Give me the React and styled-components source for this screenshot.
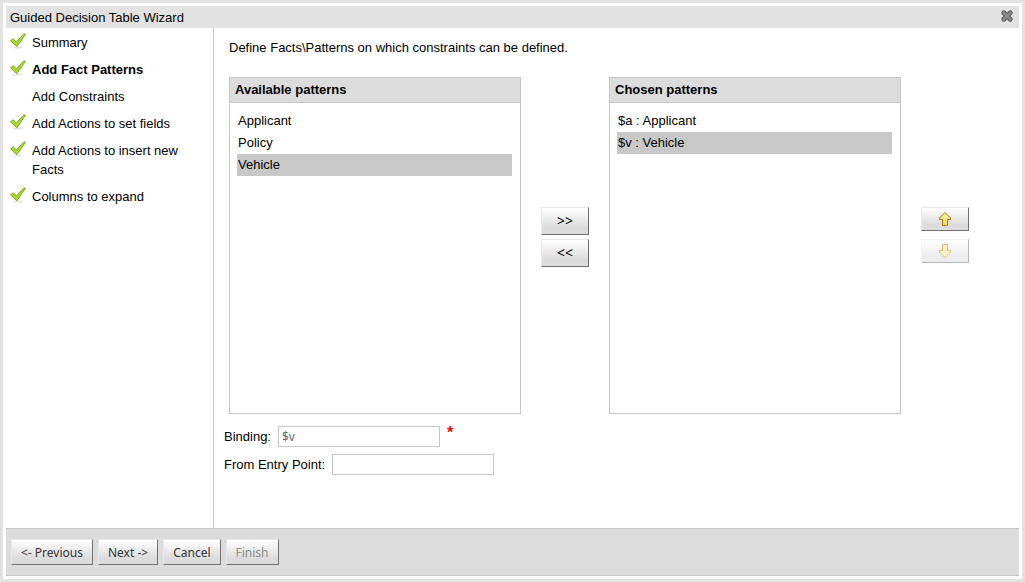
import { useState } from 'react';
import styled, { createGlobalStyle } from 'styled-components';

const GlobalStyle = createGlobalStyle`
  * {
    box-sizing: border-box;
  }

  body {
    margin: 0;
    background: #ffffff;
    color: #000000;
    font-family: 'Liberation Sans', Arial, sans-serif;
    font-size: 13px;
    line-height: 19px;
  }
`;

const Dialog = styled.main`
  display: flex;
  flex-direction: column;
  min-height: 100vh;
  padding: 3px;
  border: 3px solid #e2e2e2;
`;

const TitleBar = styled.header`
  display: flex;
  align-items: center;
  justify-content: space-between;
  height: 22px;
  padding: 0 4px;
  background: #e2e2e2;
`;

const Title = styled.h1`
  margin: 0;
  font-size: 13px;
  font-weight: 400;
`;

const CloseButton = styled.button`
  display: flex;
  width: 16px;
  height: 18px;
  padding: 0;
  border: none;
  background: none;
`;

const Body = styled.div`
  display: flex;
  flex: 1;
`;

const Sidebar = styled.nav`
  flex: 0 0 208px;
  padding: 5px 4px;
  border-right: 1px solid #c6c6c6;
`;

const Steps = styled.ol`
  display: flex;
  flex-direction: column;
  gap: 8px;
  margin: 0;
  padding: 0;
  list-style: none;
`;

const Step = styled.li`
  display: grid;
  grid-template-columns: 16px 1fr;
  column-gap: 6px;
  padding-right: 24px;
  font-weight: ${({ $current }) => ($current ? 700 : 400)};
`;

const StepLabel = styled.span`
  grid-column: 2;
`;

const Content = styled.section`
  flex: 1;
  min-width: 0;
  padding: 10px;
`;

const Intro = styled.p`
  margin: 0 0 20px;
  padding: 0 5px;
`;

const Patterns = styled.div`
  display: grid;
  grid-template-columns: minmax(0, 1fr) 48px minmax(0, 1fr) 48px;
  gap: 20px;
  padding: 0 40px 0 5px;
`;

const Panel = styled.section`
  min-height: 337px;
  border: 1px solid #c6c6c6;
`;

const PanelTitle = styled.h2`
  margin: 0;
  padding: 2px 5px 3px;
  border-bottom: 1px solid #c6c6c6;
  background: #dcdcdc;
  font-size: 13px;
  line-height: 19px;
`;

const PatternList = styled.ul`
  margin: 0;
  padding: 7px 8px 7px 7px;
  list-style: none;
`;

const PatternItem = styled.button`
  display: block;
  width: 100%;
  height: 22px;
  padding: 0 1px 2px;
  border: none;
  background: ${({ $selected }) => ($selected ? '#c8c8c8' : 'transparent')};
  color: inherit;
  font: inherit;
  text-align: left;
`;

const ButtonColumn = styled.div`
  display: flex;
  flex-direction: column;
  gap: ${({ $gap }) => $gap}px;
  padding-top: 130px;
`;

const Button = styled.button`
  display: flex;
  align-items: center;
  justify-content: center;
  height: 26px;
  padding: 0 9px;
  border: 1px solid;
  border-color: #e8e8e8 #707070 #707070 #e8e8e8;
  background: linear-gradient(#ffffff, #dcdcdc 75%);
  color: #333333;
  font-family: 'Noto Sans', 'Open Sans', sans-serif;
  font-size: 12px;
  white-space: nowrap;

  &:disabled {
    color: #8c8c8c;
  }
`;

const MoveButton = styled(Button)`
  height: 28px;
  padding-bottom: 2px;
  color: #000000;
  font-size: 14px;
`;

const ArrowButton = styled(Button)`
  height: 24px;
  padding: 0;

  &:disabled {
    opacity: 0.5;
  }
`;

const Form = styled.form`
  display: flex;
  flex-direction: column;
  gap: 7px;
  margin-top: 12px;
`;

const Field = styled.div`
  display: flex;
  align-items: center;
  gap: 7px;
`;

const Input = styled.input`
  width: 162px;
  height: 21px;
  padding: 0 3px;
  border: 1px solid #c6c6c6;
  color: #666666;
  font-family: 'Noto Sans', 'Open Sans', sans-serif;
  font-size: 12px;
`;

const Required = styled.span`
  align-self: flex-start;
  color: #ff0000;
  font-size: 16px;
  font-weight: 700;
  line-height: 14px;
`;

const Footer = styled.footer`
  display: flex;
  gap: 5px;
  padding: 10px 5px;
  border-top: 1px solid #c6c6c6;
  border-bottom: 1px solid #c6c6c6;
  background: #dcdcdc;
`;

const CheckIcon = () => (
  <svg width="16" height="16" viewBox="0 0 16 16" aria-hidden="true">
    <ellipse cx="8" cy="14.500" rx="5" ry="1" fill="#e4e4e4" />
    <path
      d="M.6 7.700 3.400 5.800l2.900 3.300L13.800.9l1.700.3L6.800 13.800z"
      fill="#a8da30"
      stroke="#7cab26"
      strokeLinejoin="round"
    />
  </svg>
);

const CloseIcon = () => (
  <svg width="16" height="16" viewBox="0 0 16 16" aria-hidden="true">
    <path
      d="M4.800 4.800 11.200 11.200M11.200 4.800 4.800 11.200"
      stroke="#5c5c5c"
      strokeWidth="5"
      strokeLinecap="round"
    />
    <path
      d="M4.800 4.800 11.200 11.200M11.200 4.800 4.800 11.200"
      stroke="#868686"
      strokeWidth="3"
      strokeLinecap="round"
    />
  </svg>
);

const ArrowIcon = ({ down }) => (
  <svg width="16" height="16" viewBox="0 0 16 16" aria-hidden="true">
    <defs>
      <linearGradient id="arrow-fill" x2="0" y2="1">
        <stop offset="0" stopColor="#fff0b0" />
        <stop offset="1" stopColor="#ffd45c" />
      </linearGradient>
    </defs>
    <path
      d="M8 1.500 13.500 7v1.500h-3v6h-5v-6h-3V7z"
      transform={down ? 'rotate(180 8 8)' : undefined}
      fill="url(#arrow-fill)"
      stroke="#b87506"
      strokeLinejoin="round"
    />
  </svg>
);

const steps = [
  { label: 'Summary', done: true },
  { label: 'Add Fact Patterns', done: true, current: true },
  { label: 'Add Constraints' },
  { label: 'Add Actions to set fields', done: true },
  { label: 'Add Actions to insert new Facts', done: true },
  { label: 'Columns to expand', done: true },
];

const available = ['Applicant', 'Policy', 'Vehicle'];
const chosen = ['$a : Applicant', '$v : Vehicle'];

const PatternPanel = ({ title, items }) => {
  const [selected, setSelected] = useState(items[items.length - 1]);

  return (
    <Panel>
      <PanelTitle>{title}</PanelTitle>
      <PatternList>
        {items.map((item) => (
          <li key={item}>
            <PatternItem
              type="button"
              aria-pressed={item === selected}
              $selected={item === selected}
              onClick={() => setSelected(item)}
            >
              {item}
            </PatternItem>
          </li>
        ))}
      </PatternList>
    </Panel>
  );
};

const App = () => {
  const [binding, setBinding] = useState('$v');

  return (
    <>
      <GlobalStyle />
      <Dialog>
        <TitleBar>
          <Title>Guided Decision Table Wizard</Title>
          <CloseButton type="button" aria-label="Close">
            <CloseIcon />
          </CloseButton>
        </TitleBar>
        <Body>
          <Sidebar>
            <Steps>
              {steps.map(({ label, done, current }) => (
                <Step key={label} $current={current}>
                  {done && <CheckIcon />}
                  <StepLabel>{label}</StepLabel>
                </Step>
              ))}
            </Steps>
          </Sidebar>
          <Content>
            <Intro>
              Define Facts\Patterns on which constraints can be defined.
            </Intro>
            <Patterns>
              <PatternPanel title="Available patterns" items={available} />
              <ButtonColumn $gap={4}>
                <MoveButton type="button">&gt;&gt;</MoveButton>
                <MoveButton type="button">&lt;&lt;</MoveButton>
              </ButtonColumn>
              <PatternPanel title="Chosen patterns" items={chosen} />
              <ButtonColumn $gap={8}>
                <ArrowButton type="button" aria-label="Move up">
                  <ArrowIcon />
                </ArrowButton>
                <ArrowButton type="button" aria-label="Move down" disabled>
                  <ArrowIcon down />
                </ArrowButton>
              </ButtonColumn>
            </Patterns>
            <Form>
              <Field>
                <label htmlFor="binding">Binding:</label>
                <Input
                  id="binding"
                  value={binding}
                  onChange={(e) => setBinding(e.target.value)}
                />
                <Required>*</Required>
              </Field>
              <Field>
                <label htmlFor="entry-point">From Entry Point:</label>
                <Input id="entry-point" />
              </Field>
            </Form>
          </Content>
        </Body>
        <Footer>
          <Button type="button">&lt;- Previous</Button>
          <Button type="button">Next -&gt;</Button>
          <Button type="button">Cancel</Button>
          <Button type="button" disabled>
            Finish
          </Button>
        </Footer>
      </Dialog>
    </>
  );
};

export default App;
